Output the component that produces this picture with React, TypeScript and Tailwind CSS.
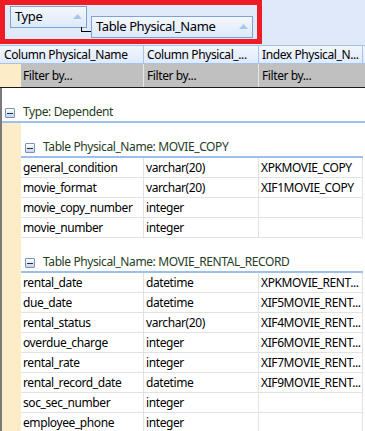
import React from "react";

const FONT = { fontFamily: '"Noto Sans", "Open Sans", sans-serif', letterSpacing: "-0.4px" };

function Minus() {
  return (
    <div className="flex h-[10px] w-[10px] items-center justify-center rounded-[1px] border border-[#7b93b5] bg-gradient-to-b from-white to-[#c4d4ea]">
      <div className="h-px w-[6px] bg-[#1c2c4c]" />
    </div>
  );
}

function GroupBox({ label, w }: { label: string; w: string }) {
  return (
    <div
      className={`flex h-[22px] ${w} items-center justify-between border border-[#7da2d8] bg-gradient-to-b from-[#f4f8fe] to-[#dde9fa] pl-[4px] pr-[4px] text-[13px] text-black`}
    >
      <span>{label}</span>
      <svg width="9" height="6" viewBox="0 0 9 6">
        <polygon points="4.5,0 9,5 0,5" fill="#a9c6ee" />
      </svg>
    </div>
  );
}

type Row = [string, string, string];

const copyRows: Row[] = [
  ["general_condition", "varchar(20)", "XPKMOVIE_COPY"],
  ["movie_format", "varchar(20)", "XIF1MOVIE_COPY"],
  ["movie_copy_number", "integer", ""],
  ["movie_number", "integer", ""],
];

const rentalRows: Row[] = [
  ["rental_date", "datetime", "XPKMOVIE_RENT..."],
  ["due_date", "datetime", "XIF5MOVIE_RENT..."],
  ["rental_status", "varchar(20)", "XIF4MOVIE_RENT..."],
  ["overdue_charge", "integer", "XIF6MOVIE_RENT..."],
  ["rental_rate", "integer", "XIF7MOVIE_RENT..."],
  ["rental_record_date", "datetime", "XIF9MOVIE_RENT..."],
  ["soc_sec_number", "integer", ""],
  ["employee_phone", "integer", ""],
];

function DataRow({ r }: { r: Row }) {
  return (
    <div className="flex h-[20px] border-b border-[#e2e2e2] text-[12px] text-black">
      <div className="flex w-[123px] items-center border-r border-[#e2e2e2] pl-[2px] whitespace-nowrap overflow-hidden">{r[0]}</div>
      <div className="flex w-[115px] items-center border-r border-[#e2e2e2] pl-[2px] whitespace-nowrap overflow-hidden">{r[1]}</div>
      <div className="flex w-[104px] items-center border-r border-[#e2e2e2] pl-[2px] whitespace-nowrap overflow-hidden">{r[2]}</div>
    </div>
  );
}

function TableGroup({ title, rows }: { title: string; rows: Row[] }) {
  return (
    <div className="flex flex-col">
      <div className="flex h-[35px] items-end border-b-2 border-[#9cc0ec] pb-[2px] pl-[4px]">
        <div className="mb-[1px]"><Minus /></div>
        <span className="ml-[8px] text-[12px] leading-[14px] text-[#253d25]">{title}</span>
      </div>
      {rows.map((r) => (
        <DataRow key={r[0]} r={r} />
      ))}
    </div>
  );
}

export default function App() {
  return (
    <div className="h-[431px] w-[365px] overflow-hidden bg-white" style={FONT}>
      {/* group panel */}
      <div className="flex h-[45px] bg-[#dfe9f9]">
        <div className="relative flex h-[44px] w-[262px] items-start border-[5px] border-[#ee1c24] bg-[#e0eaf9]">
          <div className="ml-[5px] mt-[1px]">
            <GroupBox label="Type" w="w-[77px]" />
          </div>
          <div className="ml-[4px] mt-[11px]">
            <GroupBox label="Table Physical_Name" w="w-[162px]" />
          </div>
          <div className="absolute left-[76px] top-[22px] h-[5px] w-[10px] border-b border-l border-black" />
        </div>
      </div>
      {/* header */}
      <div className="flex h-[19px] border-b border-t border-[#a4c4ec] bg-gradient-to-b from-[#f2f7fe] to-[#dfeafb] text-[12px] text-black">
        <div className="flex w-[144px] items-center border-r border-[#a4c4ec] pl-[4px] whitespace-nowrap">Column Physical_Name</div>
        <div className="flex w-[115px] items-center border-r border-[#a4c4ec] pl-[3px] whitespace-nowrap">Column Physical_...</div>
        <div className="flex w-[104px] items-center border-r border-[#a4c4ec] pl-[3px] whitespace-nowrap">Index Physical_N...</div>
      </div>
      {/* filter row */}
      <div className="flex h-[24px] border-b border-[#1a1a1a] bg-[#c0c0c0] text-[12px] text-black">
        <div className="w-[21px] bg-[#fdecc8]" />
        <div className="flex w-[123px] items-center border-r border-[#e6e6e6] pl-[2px]">Filter by...</div>
        <div className="flex w-[115px] items-center border-r border-[#e6e6e6] pl-[3px]">Filter by...</div>
        <div className="flex w-[104px] items-center pl-[3px]">Filter by...</div>
      </div>
      {/* body */}
      <div className="flex flex-col border-l-2 border-[#7a7a7a]">
        <div className="flex h-[35px] items-end border-b-2 border-[#9cc0ec] pb-[2px] pl-[3px]">
          <div className="mb-[1px]"><Minus /></div>
          <span className="ml-[8px] text-[12px] leading-[14px] text-[#253d25]">Type: Dependent</span>
        </div>
        <div className="flex">
          <div className="w-[19px] shrink-0 bg-[#fdecc8]" />
          <div className="flex flex-col">
            <TableGroup title="Table Physical_Name: MOVIE_COPY" rows={copyRows} />
            <TableGroup title="Table Physical_Name: MOVIE_RENTAL_RECORD" rows={rentalRows} />
          </div>
        </div>
      </div>
    </div>
  );
}
